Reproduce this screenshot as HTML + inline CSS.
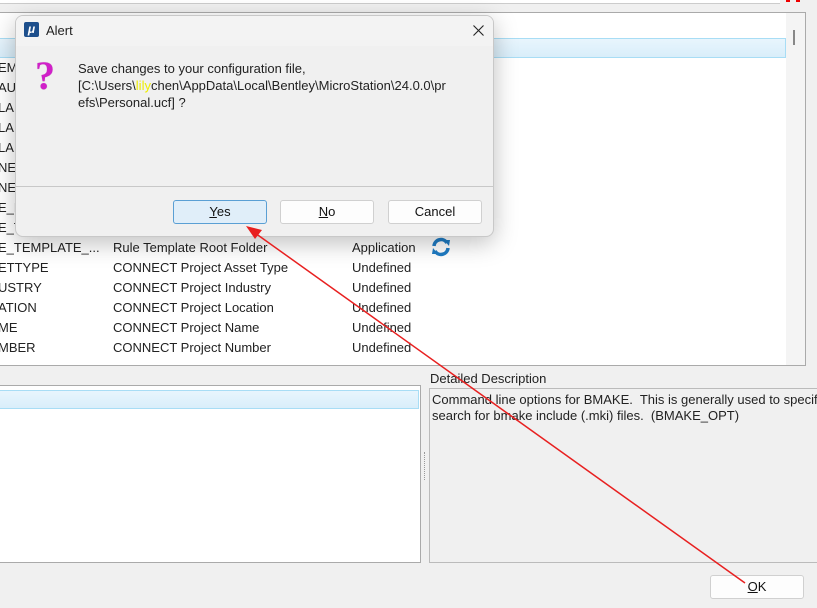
<!DOCTYPE html>
<html><head><style>
*{margin:0;padding:0;box-sizing:border-box}
body{width:817px;height:608px;overflow:hidden;background:#f0f0f0;font-family:"Liberation Sans",sans-serif;font-size:13px;color:#222;position:relative}
.abs{position:absolute}
.row{position:absolute;left:0;height:20px;line-height:20px;white-space:nowrap}
.c1{position:absolute;left:-2px}.c2{position:absolute;left:113px}.c3{position:absolute;left:352px}
.btn{position:absolute;height:24px;border:1px solid #d0d0d0;background:#fdfdfd;border-radius:3px;text-align:center;line-height:22px;font-size:13px;color:#111}
</style></head><body>
<div class="abs" style="left:0;top:0;width:780px;height:4px;background:#fff;border-bottom:1px solid #ccc"></div>
<div class="abs" style="left:786px;top:0;width:4px;height:2px;background:#e00"></div>
<div class="abs" style="left:796px;top:0;width:4px;height:2px;background:#e00"></div>
<div class="abs" style="left:0;top:12px;width:806px;height:354px;background:#fff;border:1px solid #aaa;border-left:none"></div>
<div class="abs" style="left:786px;top:13px;width:19px;height:352px;background:#f4f4f4"></div>
<div class="abs" style="left:793px;top:30px;width:2px;height:15px;background:#888"></div>
<div class="abs" style="left:0;top:38px;width:786px;height:20px;background:linear-gradient(#e8f5fd,#d9eefa);border:1px solid #a8ddf5;border-left:none"></div>
<div class="row" style="top:58px"><span class="c1">EM</span></div>
<div class="row" style="top:78px"><span class="c1">AUI</span></div>
<div class="row" style="top:98px"><span class="c1">LA</span></div>
<div class="row" style="top:118px"><span class="c1">LA</span></div>
<div class="row" style="top:138px"><span class="c1">LA</span></div>
<div class="row" style="top:158px"><span class="c1">NE</span></div>
<div class="row" style="top:178px"><span class="c1">NE</span></div>
<div class="row" style="top:198px"><span class="c1">E_E</span></div>
<div class="row" style="top:218px"><span class="c1">E_T</span></div>
<div class="row" style="top:238px"><span class="c1">E_TEMPLATE_...</span><span class="c2">Rule Template Root Folder</span><span class="c3">Application</span></div>
<div class="row" style="top:258px"><span class="c1">ETTYPE</span><span class="c2">CONNECT Project Asset Type</span><span class="c3">Undefined</span></div>
<div class="row" style="top:278px"><span class="c1">USTRY</span><span class="c2">CONNECT Project Industry</span><span class="c3">Undefined</span></div>
<div class="row" style="top:298px"><span class="c1">ATION</span><span class="c2">CONNECT Project Location</span><span class="c3">Undefined</span></div>
<div class="row" style="top:318px"><span class="c1">ME</span><span class="c2">CONNECT Project Name</span><span class="c3">Undefined</span></div>
<div class="row" style="top:338px"><span class="c1">MBER</span><span class="c2">CONNECT Project Number</span><span class="c3">Undefined</span></div>
<svg class="abs" style="left:431px;top:237px" width="20" height="20" viewBox="0 0 20 20"><path d="M3 9 A7 7 0 0 1 16 6" stroke="#1f7cc4" stroke-width="3.5" fill="none"/><path d="M17 11 A7 7 0 0 1 4 14" stroke="#1f7cc4" stroke-width="3.5" fill="none"/><path d="M13 3 L19 3 L18 9Z" fill="#1f7cc4"/><path d="M7 17 L1 17 L2 11Z" fill="#1f7cc4"/></svg>
<div class="abs" style="left:0;top:385px;width:421px;height:178px;background:#fff;border:1px solid #aaa;border-left:none"></div>
<div class="abs" style="left:0;top:390px;width:419px;height:19px;background:linear-gradient(#e8f5fd,#d9eefa);border:1px solid #a8ddf5;border-left:none"></div>
<div class="abs" style="left:424px;top:452px;width:2px;height:28px;border-left:1px dotted #999"></div>
<div class="abs" style="left:430px;top:371px">Detailed Description</div>
<div class="abs" style="left:429px;top:388px;width:400px;height:175px;border:1px solid #bbb;background:#f0f0f0;padding:3px 2px;line-height:16px;white-space:nowrap">Command line options for BMAKE.&nbsp; This is generally used to specify<br>search for bmake include (.mki) files.&nbsp; (BMAKE_OPT)</div>
<div class="btn" style="left:710px;top:575px;width:94px"><u>O</u>K</div>

<div class="abs" style="left:15px;top:15px;width:479px;height:222px;border:1px solid #c8c8c8;border-radius:8px;background:#f0f0f0;box-shadow:0 6px 24px rgba(0,0,0,.25);overflow:hidden">
 <div class="abs" style="left:0;top:0;width:100%;height:30px;background:#f3f3f3"></div>
 <div class="abs" style="left:8px;top:6px;width:15px;height:15px;background:#1d4f8c;border-radius:2px;color:#fff;font-size:12px;font-style:italic;font-weight:bold;line-height:15px;text-align:center">μ</div>
 <div class="abs" style="left:30px;top:7px;font-size:13px">Alert</div>
 <svg class="abs" style="left:457px;top:9px" width="11" height="11"><path d="M0.5 0.5L10.5 10.5M10.5 0.5L0.5 10.5" stroke="#222" stroke-width="1.1"/></svg>
 <div class="abs" style="left:19px;top:36px;font-size:40px;font-family:'Liberation Serif',serif;font-weight:bold;color:#d020c8;text-shadow:0 0 2px #fff,0 0 1px #888">?</div>
 <div class="abs" style="left:62px;top:44px;line-height:17px;font-size:13px">Save changes to your configuration file,<br>[C:\Users\<span style="color:#ee0">lily</span>chen\AppData\Local\Bentley\MicroStation\24.0.0\pr<br>efs\Personal.ucf] ?</div>
 <div class="abs" style="left:0;top:170px;width:100%;height:1px;background:#c8c8c8"></div>
 <div class="btn" style="left:157px;top:184px;width:94px;background:#e0eef9;border-color:#5a9fd4"><u>Y</u>es</div>
 <div class="btn" style="left:264px;top:184px;width:94px"><u>N</u>o</div>
 <div class="btn" style="left:372px;top:184px;width:94px">Cancel</div>
</div>
<svg class="abs" style="left:0;top:0" width="817" height="608"><line x1="745" y1="583" x2="255" y2="233" stroke="#e82020" stroke-width="1.5"/><path d="M246 226 L262 230 L255 239Z" fill="#e82020"/></svg>
</body></html>
